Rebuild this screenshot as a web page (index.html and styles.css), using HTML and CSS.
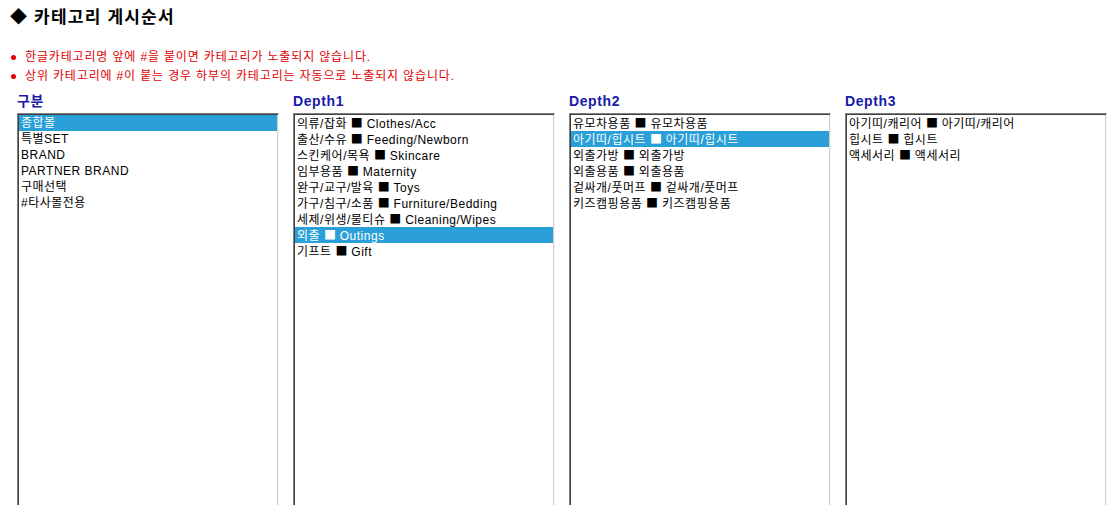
FILE: index.html
```html
<!DOCTYPE html>
<html lang="ko">
<head>
<meta charset="utf-8">
<link rel="stylesheet" href="styles.css">
</head>
<body>
<div class="page">
  <h1 class="title">◆ 카테고리 게시순서</h1>
  <ul class="notes">
    <li>한글카테고리명 앞에 #을 붙이면 카테고리가 노출되지 않습니다.</li>
    <li>상위 카테고리에 #이 붙는 경우 하부의 카테고리는 자동으로 노출되지 않습니다.</li>
  </ul>
  <div class="columns">
    <div class="col">
      <div class="label">구분</div>
      <div class="list">
        <div class="item sel">종합몰</div>
        <div class="item">특별SET</div>
        <div class="item">BRAND</div>
        <div class="item">PARTNER BRAND</div>
        <div class="item">구매선택</div>
        <div class="item">#타사몰전용</div>
      </div>
    </div>
    <div class="col">
      <div class="label">Depth1</div>
      <div class="list">
        <div class="item">의류/잡화 <span class="sq">■</span> Clothes/Acc</div>
        <div class="item">출산/수유 <span class="sq">■</span> Feeding/Newborn</div>
        <div class="item">스킨케어/목욕 <span class="sq">■</span> Skincare</div>
        <div class="item">임부용품 <span class="sq">■</span> Maternity</div>
        <div class="item">완구/교구/발육 <span class="sq">■</span> Toys</div>
        <div class="item">가구/침구/소품 <span class="sq">■</span> Furniture/Bedding</div>
        <div class="item">세제/위생/물티슈 <span class="sq">■</span> Cleaning/Wipes</div>
        <div class="item sel">외출 <span class="sq">■</span> Outings</div>
        <div class="item">기프트 <span class="sq">■</span> Gift</div>
      </div>
    </div>
    <div class="col">
      <div class="label">Depth2</div>
      <div class="list">
        <div class="item">유모차용품 <span class="sq">■</span> 유모차용품</div>
        <div class="item sel">아기띠/힙시트 <span class="sq">■</span> 아기띠/힙시트</div>
        <div class="item">외출가방 <span class="sq">■</span> 외출가방</div>
        <div class="item">외출용품 <span class="sq">■</span> 외출용품</div>
        <div class="item">겉싸개/풋머프 <span class="sq">■</span> 겉싸개/풋머프</div>
        <div class="item">키즈캠핑용품 <span class="sq">■</span> 키즈캠핑용품</div>
      </div>
    </div>
    <div class="col">
      <div class="label">Depth3</div>
      <div class="list">
        <div class="item">아기띠/캐리어 <span class="sq">■</span> 아기띠/캐리어</div>
        <div class="item">힙시트 <span class="sq">■</span> 힙시트</div>
        <div class="item">액세서리 <span class="sq">■</span> 액세서리</div>
      </div>
    </div>
  </div>
</div>
</body>
</html>
```

FILE: styles.css
```css
html, body {
  margin: 0;
  padding: 0;
  background: #ffffff;
  overflow: hidden;
}
body {
  font-family: "Liberation Sans", "Noto Sans CJK KR", sans-serif;
  color: #000;
}
.page {
  padding: 8px 0 0 10px;
}
.title {
  margin: 0;
  font-size: 17px;
  line-height: 20px;
  font-weight: bold;
  letter-spacing: 1.2px;
}
.notes {
  list-style: none;
  margin: 20px 0 0 0;
  padding: 0;
  color: #e00000;
  font-size: 12px;
  line-height: 19px;
  letter-spacing: 0.85px;
}
.notes li {
  position: relative;
  padding-left: 15px;
}
.notes li::before {
  content: "";
  position: absolute;
  left: 1px;
  top: 7px;
  width: 5px;
  height: 5px;
  border-radius: 50%;
  background: #e00000;
}
.columns {
  display: flex;
  gap: 14px;
  margin-top: 6px;
  padding-left: 7px;
}
.col {
  width: 262px;
  display: flex;
  flex-direction: column;
}
.label {
  color: #1a1aa8;
  font-size: 14px;
  font-weight: bold;
  line-height: 18px;
  margin-bottom: 3px;
  letter-spacing: 0.6px;
}
.list {
  height: 420px;
  border-top: 1px solid #808080;
  border-left: 1px solid #808080;
  border-right: 1px solid #f4f4f4;
  border-bottom: 1px solid #f4f4f4;
  box-shadow: inset 1px 1px 0 #404040, inset -1px -1px 0 #d4d0c8;
  padding: 1px;
  box-sizing: border-box;
}
.item {
  height: 16px;
  line-height: 16px;
  font-size: 12px;
  padding-left: 2px;
  white-space: nowrap;
  letter-spacing: 0.5px;
}
.item.sel {
  background: #2a9fd8;
  color: #ffffff;
}
.sq {
  font-family: "Noto Sans CJK KR", sans-serif;
  letter-spacing: 0;
}
```
